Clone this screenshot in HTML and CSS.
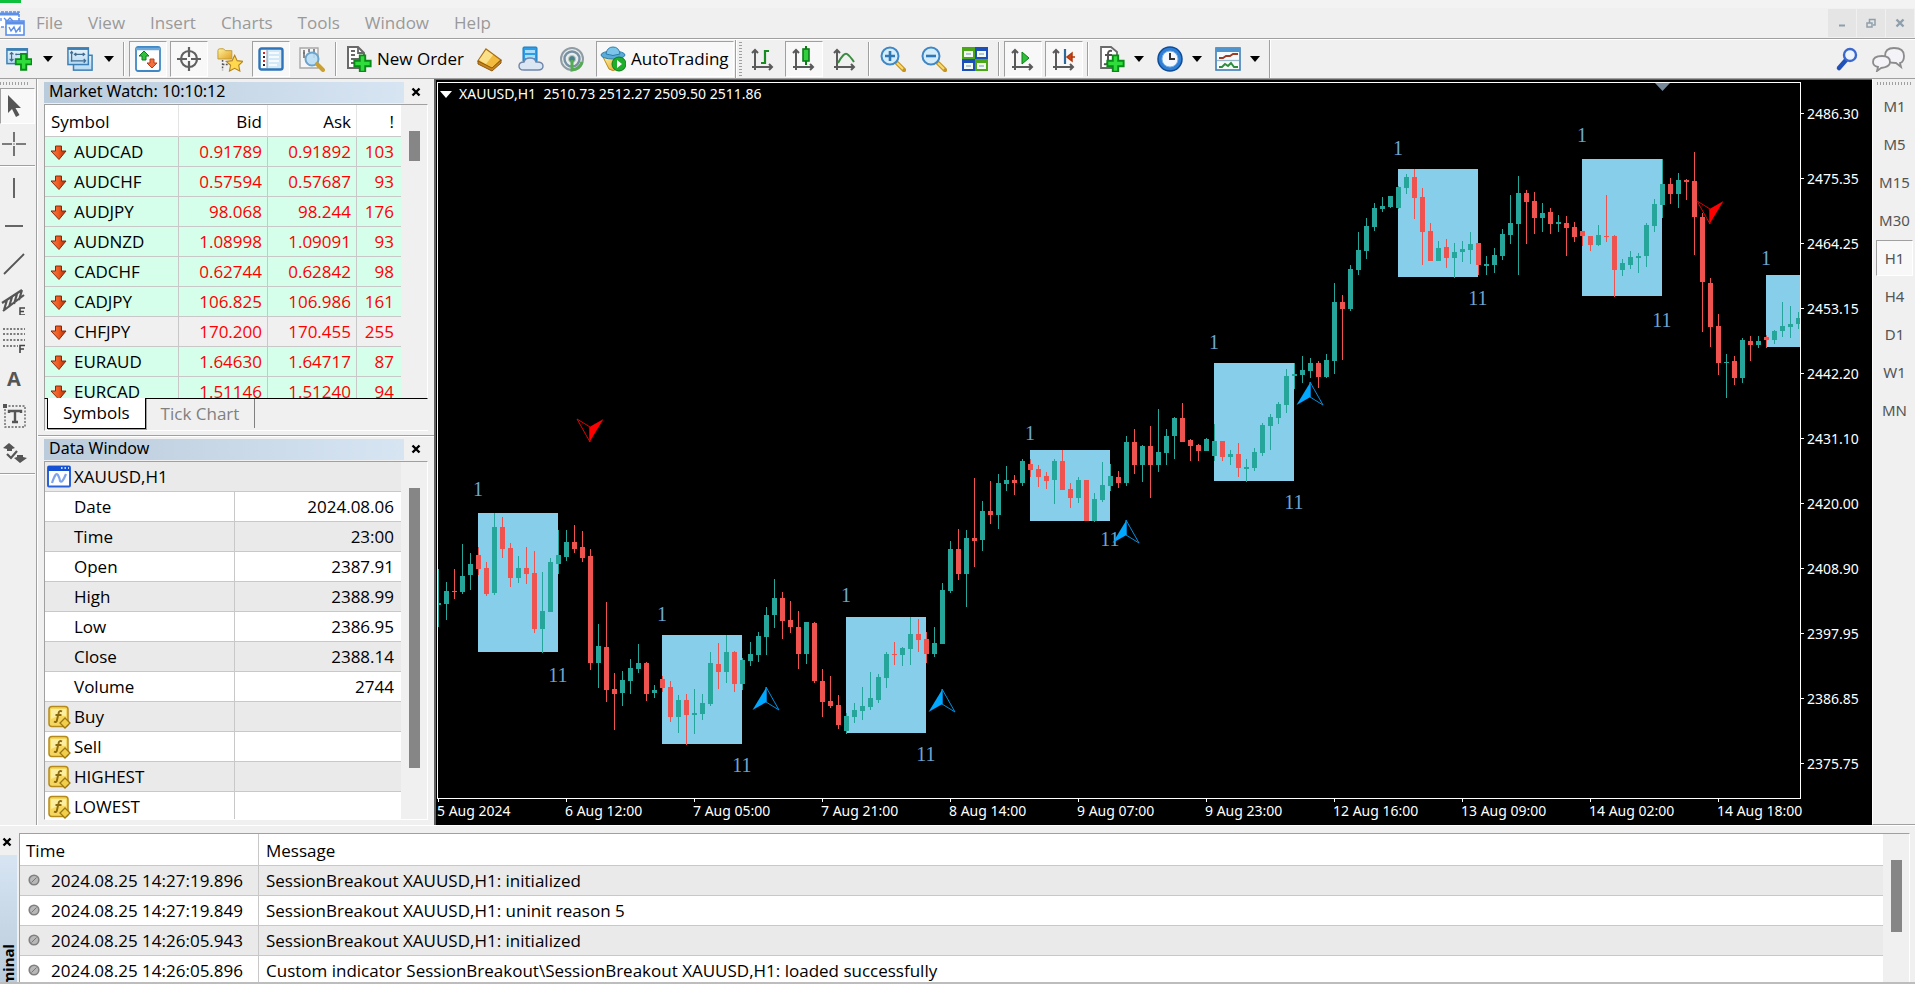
FILE: index.html
```html
<!DOCTYPE html>
<html lang="en">
<head>
<meta charset="utf-8">
<title>Trading terminal</title>
<link rel="stylesheet" href="styles.css">
</head>
<body>
<svg class="defs" width="0" height="0" aria-hidden="true">
  <defs>
    <linearGradient id="blue" x1="0" y1="0" x2="0" y2="1"><stop offset="0" stop-color="#eaf5fc"/><stop offset="1" stop-color="#b4d9f2"/></linearGradient>
    <linearGradient id="gold" x1="0" y1="0" x2="1" y2="1"><stop offset="0" stop-color="#fff2a0"/><stop offset="1" stop-color="#e2a020"/></linearGradient>
    <linearGradient id="flame" x1="0" y1="0" x2="1" y2="0"><stop offset="0" stop-color="#f08050"/><stop offset="0.5" stop-color="#ee5a20"/><stop offset="1" stop-color="#a82a04"/></linearGradient>
    <symbol id="plus" viewBox="0 0 14 14"><path d="M5 1h4v4h4v4H9v4H5V9H1V5h4z" fill="#2fdc3c" stroke="#0a8a18" stroke-width="1.4"/></symbol>
    <symbol id="close" viewBox="0 0 10 10"><path d="M1.500 1.500L8.500 8.500M8.500 1.500L1.500 8.500" stroke="currentColor" stroke-width="2.400"/></symbol>
    <symbol id="down" viewBox="0 0 18 18"><path d="M5.500 2h6v5h4.500L9 15.500 1 7h4.500z" fill="url(#flame)" stroke="#8c2606"/></symbol>
    <symbol id="fx" viewBox="0 0 24 24">
      <rect x="2" y="1.500" width="19" height="20" rx="3" fill="#f5d760" stroke="#b58a1c" stroke-width="1.500"/>
      <path d="M4 4h15v7q-8-1-15 3z" fill="#fbeea0"/>
      <path d="M15 6.500q-3-1.500-3.500 2L10 15q-.5 3-3 1.500M8.500 10h6" fill="none" stroke="#8c6a10" stroke-width="1.900"/>
      <path d="M18 13l5 5-5 5-5-5z" fill="#f2cf4a" stroke="#9c7612" stroke-width="1.300"/>
    </symbol>
    <symbol id="gear" viewBox="0 0 14 14"><circle cx="7" cy="7" r="4.800" fill="#b8b8b8" stroke="#808080" stroke-width="1.600"/><path d="M4.500 9.500l5-5" stroke="#777"/></symbol>
    <symbol id="axes" viewBox="0 0 24 26"><path d="M5 24V4M2 7l3-3 3 3M2 21h20M19 18l3 3-3 3" fill="none" stroke="#5a5a5a" stroke-width="2"/></symbol>
  </defs>
</svg>

<div class="app">
  <div class="titlebar"><span class="app-logo"></span></div>

  <nav class="menubar">
    <svg class="menu-logo" viewBox="0 0 26 26"><g fill="#fff" stroke="#5b8fe8" stroke-width="1.600"><rect x="-3" y="2" width="22" height="15" stroke-dasharray="3 1"/><path d="M-3 4h22" stroke-width="3"/><rect x="6" y="11" width="18" height="14"/><path d="M6 13h18" stroke-width="3"/></g><path d="M1 11v-3M4 8l3 3 3-3 3 3" fill="none" stroke="#5b8fe8" stroke-width="1.300"/><path d="M9 17l2 4 3-4 2 5 4-5v5" fill="none" stroke="#5b8fe8" stroke-width="1.400"/></svg>
    <button>File</button><button>View</button><button>Insert</button><button>Charts</button><button>Tools</button><button>Window</button><button>Help</button>
    <div class="window-buttons">
      <button aria-label="Minimize"><svg width="10" height="10"><path d="M2 7.500h6" stroke="#8e9fac" stroke-width="2"/></svg></button>
      <button aria-label="Restore"><svg width="10" height="10"><path d="M1 5h5v4H1zM3.500 4.500V1.500H9V7H7" fill="none" stroke="#8e9fac" stroke-width="1.500"/></svg></button>
      <button aria-label="Close"><svg width="10" height="10" color="#8e9fac"><use href="#close"/></svg></button>
    </div>
  </nav>

  <div class="toolbar">
    <div class="group standard">
      <button class="tool" aria-label="New chart"><svg viewBox="0 0 28 26"><rect x="1" y="2" width="22" height="16" fill="url(#blue)" stroke="#3c7fb4" stroke-width="1.600"/><path d="M1 3h22" stroke="#3c7fb4" stroke-width="2.500"/><path d="M6 6v9M4 8l2-2 2 2M4 13l2 2 2-2M10 8h8M11 7v2" fill="none" stroke="#406c90" stroke-width="1.300"/><use href="#plus" x="9" y="6" width="20" height="20"/></svg></button>
      <button class="caret" aria-label="New chart list"></button>
      <button class="tool" aria-label="Profiles"><svg viewBox="0 0 28 26"><g fill="url(#blue)" stroke="#3c7fb4" stroke-width="1.600"><rect x="7" y="9" width="20" height="16"/><rect x="1" y="1" width="22" height="18"/></g><path d="M1 2h22" stroke="#3c7fb4" stroke-width="2.500"/><path d="M5 5v11M3.500 7L5 5l1.500 2M8 8h11M10 6.500L8 8l2 1.500M17 6.500L19 8l-2 1.500M4 15h16M18 13l2 2-2 2" fill="none" stroke="#406c90" stroke-width="1.300"/></svg></button>
      <button class="caret" aria-label="Profile list"></button>
      <i class="sep"></i>
      <button class="tool pressed" aria-label="Market Watch"><svg viewBox="0 0 26 26"><rect x="1" y="1" width="24" height="24" rx="2" fill="#fff" stroke="#3f88c5" stroke-width="1.800"/><path d="M1 3h24" stroke="#6fa9d8" stroke-width="2.500"/><path d="M9 5l5 5h-3v4H7v-4H4z" fill="#2fc23c" stroke="#0f7a1c"/><path d="M17 22l-5-5h3v-4h4v4h3z" fill="#f07040" stroke="#c03a10"/></svg></button>
      <button class="tool pressed" aria-label="Data Window"><svg viewBox="0 0 26 26"><circle cx="13" cy="13" r="8" fill="none" stroke="#606060" stroke-width="2.200"/><path d="M13 1v10M13 15v10M1 13h10M15 13h10" stroke="#606060" stroke-width="2.200"/></svg></button>
      <button class="tool" aria-label="Navigator"><svg viewBox="0 0 28 26"><path d="M1 4q0-2 2-2h4l2 2h7v9H1z" fill="url(#gold)" stroke="#c09a30"/><path d="M6 14v11M6 19h6" stroke="#555" stroke-width="1.600" stroke-dasharray="2 1.500"/><path d="M19 9l2.700 5.800 6.300.7-4.600 4.300 1.200 6.200L19 23l-5.600 3 1.200-6.200-4.600-4.300 6.300-.7z" fill="#ffd84e" stroke="#b58420" stroke-width="1.200"/></svg></button>
      <button class="tool pressed" aria-label="Terminal"><svg viewBox="0 0 26 26"><rect x="1.500" y="2.500" width="23" height="21" rx="2" fill="#d4e9f8" stroke="#2f74b8" stroke-width="2.400"/><rect x="3" y="4" width="6" height="18" fill="#fff"/><path d="M9 4v18" stroke="#89a"/><path d="M11 7h10M11 11h10M11 15h10M11 19h8" stroke="#fff" stroke-width="1.600"/><path d="M5 7h2M5 15h2" stroke="#d22" stroke-width="2"/><path d="M5 11h2M5 19h2" stroke="#223" stroke-width="2"/></svg></button>
      <button class="tool" aria-label="Strategy Tester"><svg viewBox="0 0 26 26"><path d="M1 2h18v20H1z" fill="#f6f6f6" stroke="#a8a8a8" stroke-width="1.400"/><path d="M5 4v8M15 3v9M4 7h2M10 3v3" stroke="#707070" stroke-width="1.600"/><circle cx="13" cy="13" r="6.500" fill="#b9def5" fill-opacity=".9" stroke="#6ba3cc" stroke-width="2"/><path d="M18 18l6 6" stroke="#caa030" stroke-width="4" stroke-linecap="round"/></svg></button>
      <i class="sep"></i>
      <button class="tool wide order"><svg viewBox="0 0 26 26"><path d="M2 1h10l6 6v15H2z" fill="#fff" stroke="#6a6a6a" stroke-width="2"/><path d="M12 1v6h6M5 5h4M5 9h4M5 13h8M5 17h6" fill="none" stroke="#6a6a6a" stroke-width="1.800"/><use href="#plus" x="7" y="8" width="19" height="19"/></svg>New Order</button>
      <button class="tool" aria-label="MetaEditor"><svg viewBox="0 0 26 26"><path d="M9 3l15 11-9 9L1 15z" fill="#f2bb3e" stroke="#a8701a" stroke-width="1.400"/><path d="M9 4L2 14l7 4 7-9z" fill="#fbe08a"/><path d="M1 15l14 7 9-8v3l-9 8L1 18z" fill="#c8831c" stroke="#8c5a10"/></svg></button>
      <button class="tool" aria-label="Hosting"><svg viewBox="0 0 26 26"><rect x="5" y="1" width="14" height="15" rx="1" fill="#2e9de8" stroke="#1c78bd"/><path d="M7 4h10v3H7zM7 9h10v3H7z" fill="#a9defc"/><path d="M6 24q-5 0-5-4t5-4q1-4 6-4 5 0 6 4h1q6 0 6 4t-5 4z" fill="#dbe6f4" stroke="#6f86a8" stroke-width="1.400"/></svg></button>
      <button class="tool" aria-label="Signals"><svg viewBox="0 0 26 26"><circle cx="13" cy="13" r="11" fill="#e8ecec" stroke="#8f9ca4" stroke-width="2"/><circle cx="13" cy="13" r="7.500" fill="none" stroke="#7890a4" stroke-width="2.400"/><circle cx="13" cy="13" r="3.500" fill="#4a7f8c" stroke="#b8cab8"/><path d="M13 14v10q8-1 10-8" fill="none" stroke="#55ac50" stroke-width="3"/></svg></button>
      <button class="tool wide auto pressed"><svg viewBox="0 0 26 26"><path d="M3 11h19l-5 12q-4 3-8 0z" fill="url(#gold)" stroke="#b98a20"/><ellipse cx="13" cy="9" rx="12" ry="4" fill="#5aabd8" stroke="#2c7dac"/><path d="M6 8q1-7 7-7t7 7q-7 3-14 0z" fill="#7cc4ea" stroke="#2c7dac"/><circle cx="19" cy="18" r="7" fill="#1fae2c" stroke="#0c7c18"/><path d="M17 14l5 4-5 4z" fill="#fff"/></svg>AutoTrading</button>
    </div>
    <i class="edge"></i>
    <i class="grip"></i>
    <div class="group charts">
      <button class="tool" aria-label="Bar chart"><svg viewBox="0 0 26 26"><use href="#axes" width="24" height="26"/><path d="M15 4v14M15 5h4M11 17h4" stroke="#178c20" stroke-width="2.200"/></svg></button>
      <button class="tool pressed" aria-label="Candlesticks"><svg viewBox="0 0 26 26"><use href="#axes" width="24" height="26"/><path d="M15 0v19" stroke="#0c7c18" stroke-width="2"/><rect x="12" y="3" width="6" height="12" fill="#2fd03c" stroke="#0c7c18" stroke-width="1.600"/></svg></button>
      <button class="tool" aria-label="Line chart"><svg viewBox="0 0 26 26"><use href="#axes" width="24" height="26"/><path d="M6 17q6-11 9-9t7 8" fill="none" stroke="#3a8a40" stroke-width="2"/></svg></button>
      <i class="sep"></i>
      <button class="tool" aria-label="Zoom in"><svg viewBox="0 0 26 26"><path d="M16 16l8 8" stroke="#c89422" stroke-width="4.500" stroke-linecap="round"/><path d="M17 17l6 6" stroke="#f8dc70" stroke-width="2"/><circle cx="10" cy="10" r="8.500" fill="#d5edfa" stroke="#3f88c5" stroke-width="2"/><path d="M10 5v10M5 10h10" stroke="#2f78b4" stroke-width="2.600"/></svg></button>
      <button class="tool" aria-label="Zoom out"><svg viewBox="0 0 26 26"><path d="M16 16l8 8" stroke="#c89422" stroke-width="4.500" stroke-linecap="round"/><path d="M17 17l6 6" stroke="#f8dc70" stroke-width="2"/><circle cx="10" cy="10" r="8.500" fill="#d5edfa" stroke="#3f88c5" stroke-width="2"/><path d="M5 10h10" stroke="#2f78b4" stroke-width="2.600"/></svg></button>
      <button class="tool" aria-label="Tile windows"><svg viewBox="0 0 26 26"><path d="M0 1h13v12H0zM13 13h13v12H13z" fill="#4aa818"/><path d="M13 1h13v12H13zM0 13h13v12H0z" fill="#1c50b8"/><path d="M2 5h9v6H2zM15 5h9v6h-9zM2 17h9v6H2zM15 17h9v6h-9z" fill="#f4faf0"/><path d="M4 8h5M17 8h5M4 20h5M17 20h5" stroke="#9ab8d0" stroke-width="1.500"/></svg></button>
      <i class="sep"></i>
      <button class="tool pressed" aria-label="Auto scroll"><svg viewBox="0 0 26 26"><use href="#axes" width="24" height="26"/><path d="M12 6l7 6-7 6z" fill="#2fc03a" stroke="#0c7c18"/></svg></button>
      <button class="tool pressed" aria-label="Chart shift"><svg viewBox="0 0 26 26"><use href="#axes" width="24" height="26"/><path d="M14 3v15" stroke="#2a6a9a" stroke-width="2.200"/><path d="M24 11h-4M21 7l-5 4 5 4z" fill="#d0441c" stroke="#b0380c" stroke-width="1.500"/></svg></button>
      <i class="sep"></i>
      <button class="tool" aria-label="Indicators"><svg viewBox="0 0 26 26"><path d="M2 1h10l6 5v16H2z" fill="#fff" stroke="#6a6a6a" stroke-width="1.800"/><path d="M13 5q-4-1-4 3v7q0 4-4 3M6 9h7" fill="none" stroke="#555" stroke-width="2"/><use href="#plus" x="7" y="8" width="19" height="19"/></svg></button>
      <button class="caret" aria-label="Indicator list"></button>
      <button class="tool" aria-label="Periods"><svg viewBox="0 0 26 26"><circle cx="13" cy="13" r="12" fill="#2f7fd6" stroke="#0e4c98" stroke-width="1.500"/><circle cx="13" cy="13" r="8" fill="#f4f8fc" stroke="#7ab0e4"/><path d="M13 7v6h5" fill="none" stroke="#333" stroke-width="2"/></svg></button>
      <button class="caret" aria-label="Period list"></button>
      <button class="tool" aria-label="Templates"><svg viewBox="0 0 26 26"><rect x="1" y="2" width="24" height="22" fill="#f6fafd" stroke="#3f7fb4" stroke-width="1.600"/><path d="M1 4h24" stroke="#4f94cc" stroke-width="4"/><path d="M2 14.500h22" stroke="#9ab4c8" stroke-width="1.300"/><path d="M4 12h4l3-2h4l3-2h5" fill="none" stroke="#a03a20" stroke-width="1.900"/><path d="M4 21h3l3-3 3 2 3-3 3 4h4" fill="none" stroke="#2f8c3c" stroke-width="1.900"/></svg></button>
      <button class="caret" aria-label="Template list"></button>
    </div>
    <i class="edge"></i>
    <div class="group right">
      <button class="tool" aria-label="Search"><svg viewBox="0 0 26 26"><path d="M12 14L5 22" stroke="#2250b8" stroke-width="4.500" stroke-linecap="round"/><circle cx="16" cy="9" r="6" fill="#eef4fc" stroke="#3a68cc" stroke-width="2.400"/></svg></button>
      <button class="tool chat" aria-label="Community"><svg viewBox="0 0 34 26"><g fill="#f4f4f8" stroke="#8c8c8c" stroke-width="1.800"><path d="M22 2q10 0 10 8 0 6-4 7l1 4-5-4q-11 0-11-7 0-8 9-8z"/><path d="M10 10q8 0 8 6 0 5-9 6l-4 3 1-4q-5-1-5-5 0-6 9-6z"/></g></svg></button>
    </div>
  </div>

  <main class="main">
    <aside class="draw-tools">
      <i class="hgrip"></i>
      <button class="draw pressed" aria-label="Cursor"><svg viewBox="0 0 26 26"><path d="M6 2v18l4-4 4 8 3.500-2-4-7H19z" fill="#555"/></svg></button>
      <button class="draw" aria-label="Crosshair"><svg viewBox="0 0 26 26"><path d="M13 1v10M13 15v10M1 13h10M15 13h10M12.500 13h1" stroke="#555" stroke-width="1.600"/></svg></button>
      <i class="hsep"></i>
      <button class="draw" aria-label="Vertical line"><svg viewBox="0 0 26 26"><path d="M13 3v20" stroke="#555" stroke-width="1.800"/></svg></button>
      <button class="draw" aria-label="Horizontal line"><svg viewBox="0 0 26 26"><path d="M4 13h18" stroke="#555" stroke-width="1.800"/></svg></button>
      <button class="draw" aria-label="Trendline"><svg viewBox="0 0 26 26"><path d="M3 23L23 3" stroke="#555" stroke-width="1.800"/></svg></button>
      <button class="draw" aria-label="Equidistant channel"><svg viewBox="0 0 26 26"><path d="M1 14L21 1M2 22L23 6M6 11l-3 10M11 8L8 18M16 5l-3 10M21 1l-3 10" fill="none" stroke="#555" stroke-width="2.200"/><path d="M24 19h-5v7h5M19 22.500h4" fill="none" stroke="#444" stroke-width="1.500"/></svg></button>
      <button class="draw" aria-label="Fibonacci retracement"><svg viewBox="0 0 26 26"><path d="M2 2h22M2 7h22M2 13h22M2 19h15" stroke="#555" stroke-width="1.600" stroke-dasharray="2 1.500"/><path d="M24 18.500h-5V26M19 22h4" fill="none" stroke="#444" stroke-width="1.600"/></svg></button>
      <button class="draw letter">A</button>
      <button class="draw" aria-label="Text label"><svg viewBox="0 0 26 26"><rect x="4" y="3" width="20" height="21" fill="none" stroke="#666" stroke-width="1.400" stroke-dasharray="2 1.500"/><path d="M2 1h4v4H2z" fill="#555"/><path d="M8 10V8h12v2M14 8v11M11 19h6" fill="none" stroke="#555" stroke-width="2.400"/></svg></button>
      <button class="draw" aria-label="Arrows"><svg viewBox="0 0 26 26"><path d="M8 2l6 5-3 1v2H6V8L2 7z" fill="#555"/><path d="M6 13l4 4 6-7" fill="none" stroke="#555" stroke-width="2.200"/><path d="M19 22l-6-5 3-1v-2h6v2l4 1z" fill="#555"/></svg></button>
      <i class="hsep last"></i>
    </aside>

    <div class="dock">
      <section class="panel market">
        <header class="panel-head"><h2>Market Watch: 10:10:12</h2><button class="panel-close" aria-label="Close Market Watch"><svg width="10" height="10"><use href="#close"/></svg></button></header>
        <div class="panel-body">
          <table class="quotes">
            <thead><tr><th>Symbol</th><th>Bid</th><th>Ask</th><th>!</th></tr></thead>
            <tbody>
              <tr><td><svg><use href="#down"/></svg>AUDCAD</td><td>0.91789</td><td>0.91892</td><td>103</td></tr>
              <tr><td><svg><use href="#down"/></svg>AUDCHF</td><td>0.57594</td><td>0.57687</td><td>93</td></tr>
              <tr><td><svg><use href="#down"/></svg>AUDJPY</td><td>98.068</td><td>98.244</td><td>176</td></tr>
              <tr><td><svg><use href="#down"/></svg>AUDNZD</td><td>1.08998</td><td>1.09091</td><td>93</td></tr>
              <tr><td><svg><use href="#down"/></svg>CADCHF</td><td>0.62744</td><td>0.62842</td><td>98</td></tr>
              <tr><td><svg><use href="#down"/></svg>CADJPY</td><td>106.825</td><td>106.986</td><td>161</td></tr>
              <tr class="plain"><td><svg><use href="#down"/></svg>CHFJPY</td><td>170.200</td><td>170.455</td><td>255</td></tr>
              <tr><td><svg><use href="#down"/></svg>EURAUD</td><td>1.64630</td><td>1.64717</td><td>87</td></tr>
              <tr><td><svg><use href="#down"/></svg>EURCAD</td><td>1.51146</td><td>1.51240</td><td>94</td></tr>
            </tbody>
          </table>
          <div class="track"><div class="thumb market-thumb"></div></div>
        </div>
        <div class="tabs"><button class="tab active">Symbols</button><button class="tab">Tick Chart</button></div>
      </section>

      <section class="panel data">
        <header class="panel-head"><h2>Data Window</h2><button class="panel-close" aria-label="Close Data Window"><svg width="10" height="10"><use href="#close"/></svg></button></header>
        <div class="panel-body">
          <table class="values">
            <tbody>
              <tr><td colspan="2" class="icon"><svg viewBox="0 0 24 24"><rect x="1" y="1.500" width="22" height="20" rx="1" fill="#fff" stroke="#2c62d8" stroke-width="2"/><path d="M1 3.500h22" stroke="#1450d4" stroke-width="5"/><path d="M14 3h1.500M17.500 3H19M21 3h1" stroke="#fff" stroke-width="1.500"/><path d="M5 18q4-12 6-8t2 6q2 3 6-7" fill="none" stroke="#7ea4ec" stroke-width="2.200"/></svg>XAUUSD,H1</td></tr>
              <tr><td>Date</td><td>2024.08.06</td></tr>
              <tr><td>Time</td><td>23:00</td></tr>
              <tr><td>Open</td><td>2387.91</td></tr>
              <tr><td>High</td><td>2388.99</td></tr>
              <tr><td>Low</td><td>2386.95</td></tr>
              <tr><td>Close</td><td>2388.14</td></tr>
              <tr><td>Volume</td><td>2744</td></tr>
              <tr><td class="icon"><svg><use href="#fx"/></svg>Buy</td><td></td></tr>
              <tr><td class="icon"><svg><use href="#fx"/></svg>Sell</td><td></td></tr>
              <tr><td class="icon"><svg><use href="#fx"/></svg>HIGHEST</td><td></td></tr>
              <tr><td class="icon"><svg><use href="#fx"/></svg>LOWEST</td><td></td></tr>
            </tbody>
          </table>
          <div class="track"><div class="thumb data-thumb"></div></div>
        </div>
      </section>
    </div>

    <section class="chart">
      <div class="plot">
        <svg class="canvas" id="canvas" role="img" aria-label="XAUUSD H1 candlestick chart"></svg>
        <div class="caption"><i></i><span>XAUUSD,H1&nbsp; 2510.73 2512.27 2509.50 2511.86</span></div>
      </div>
      <div class="prices"><span>2486.30</span><span>2475.35</span><span>2464.25</span><span>2453.15</span><span>2442.20</span><span>2431.10</span><span>2420.00</span><span>2408.90</span><span>2397.95</span><span>2386.85</span><span>2375.75</span></div>
      <div class="times"><span>5 Aug 2024</span><span>6 Aug 12:00</span><span>7 Aug 05:00</span><span>7 Aug 21:00</span><span>8 Aug 14:00</span><span>9 Aug 07:00</span><span>9 Aug 23:00</span><span>12 Aug 16:00</span><span>13 Aug 09:00</span><span>14 Aug 02:00</span><span>14 Aug 18:00</span></div>
    </section>

    <aside class="frames">
      <i class="hgrip"></i>
      <button>M1</button><button>M5</button><button>M15</button><button>M30</button><button class="pressed">H1</button><button>H4</button><button>D1</button><button>W1</button><button>MN</button>
    </aside>
  </main>

  <section class="terminal">
    <div class="terminal-side">
      <button class="panel-close" aria-label="Close Terminal"><svg width="10" height="10"><use href="#close"/></svg></button>
      <div class="terminal-name"><span>Terminal</span></div>
    </div>
    <div class="log-wrap">
      <table class="log">
        <thead><tr><th>Time</th><th>Message</th></tr></thead>
        <tbody>
          <tr><td><svg><use href="#gear"/></svg>2024.08.25 14:27:19.896</td><td>SessionBreakout XAUUSD,H1: initialized</td></tr>
          <tr><td><svg><use href="#gear"/></svg>2024.08.25 14:27:19.849</td><td>SessionBreakout XAUUSD,H1: uninit reason 5</td></tr>
          <tr><td><svg><use href="#gear"/></svg>2024.08.25 14:26:05.943</td><td>SessionBreakout XAUUSD,H1: initialized</td></tr>
          <tr><td><svg><use href="#gear"/></svg>2024.08.25 14:26:05.896</td><td>Custom indicator SessionBreakout\SessionBreakout XAUUSD,H1: loaded successfully</td></tr>
        </tbody>
      </table>
      <div class="track"><div class="thumb log-thumb"></div></div>
    </div>
  </section>
</div>
<script src="script.js"></script>
</body>
</html>
```

FILE: styles.css
```css
* { box-sizing: border-box; }
body {
  margin: 0;
  background: #f0f0f0;
  color: #000;
  font: 17px/28px "Open Sans", "Noto Sans", sans-serif;
}
button { margin: 0; padding: 0; border: 0; background: none; color: inherit; font: inherit; }
i { display: block; flex: none; }
svg { display: block; flex: none; }
.defs { position: absolute; }
.app { display: flex; flex-direction: column; height: 100vh; overflow: hidden; }

.titlebar { flex: none; height: 8px; background: #f3f3f3; }
.app-logo { display: block; width: 21px; height: 3px; background: #0cc03c; }

.menubar { flex: none; display: flex; align-items: center; height: 31px; border-bottom: 1px solid #a0a0a0; color: #999; }
.menu-logo { width: 26px; height: 26px; margin-right: 10px; }
.menubar > button { margin-right: 25px; }
.window-buttons { display: flex; gap: 1px; margin-left: auto; padding-right: 1px; }
.window-buttons button { display: flex; align-items: center; justify-content: center; width: 28px; height: 28px; background: #e5e5e5; }

.toolbar { flex: none; display: flex; align-items: center; height: 40px; border-top: 1px solid #fff; border-bottom: 1px solid #a0a0a0; }
.group { display: flex; align-items: center; gap: 3px; }
.tool { display: flex; align-items: center; justify-content: center; width: 38px; height: 36px; flex: none; }
.tool svg { width: 26px; height: 26px; }
.tool.wide { gap: 5px; width: auto; }
.order { padding: 0 4px 0 5px; }
.auto { margin-left: 2px; padding: 0 4px 0 3px; }
.pressed { background: #f8f8f8; border: 1px solid; border-color: #a0a0a0 #fff #fff #a0a0a0; }
.caret { display: flex; align-items: center; justify-content: center; width: 17px; height: 36px; margin-left: -3px; }
.caret::before { content: ""; border: 5px solid transparent; border-top: 6px solid #000; border-bottom: 0; }
.standard .caret { width: 20px; }
.sep { width: 2px; height: 34px; margin: 0 1px; background: #a0a0a0; border-right: 1px solid #fff; }
.edge { width: 2px; height: 38px; margin-left: 1px; background: #a0a0a0; border-right: 1px solid #fff; }
.grip { width: 3px; height: 34px; margin: 0 2px; background: repeating-linear-gradient(#a0a0a0 0 1px, #f0f0f0 1px 3px); }
.charts { margin-right: 4px; }
.right { margin-left: auto; padding-right: 6px; }
.chat { width: 40px; }
.tool.chat svg { width: 34px; }

.main { flex: 1; display: flex; min-height: 0; }
.draw-tools { flex: none; display: flex; flex-direction: column; width: 38px; padding: 3px 2px 0 0; border-right: 1px solid #fff; box-shadow: inset -1px 0 #a0a0a0; }
.hgrip { height: 3px; margin: 0 7px 3px 0; background: repeating-linear-gradient(90deg, #a0a0a0 0 1px, #f0f0f0 1px 3px); }
.draw { display: flex; align-items: center; padding-left: 1px; height: 38px; flex: none; }
.draw svg { width: 26px; height: 26px; }
.draw.pressed { height: 36px; width: 35px; margin-bottom: 1px; }
.draw.letter { padding-left: 7px; color: #555; font: bold 20px "Open Sans", sans-serif; }
.hsep { height: 2px; margin: 2px 0; background: #a0a0a0; border-bottom: 1px solid #fff; }
.hsep.last { margin: 0; }

.dock { flex: none; display: flex; flex-direction: column; width: 396px; }
.panel { display: flex; flex-direction: column; padding: 3px 6px 0; }
.market { height: 357px; border-bottom: 1px solid #a0a0a0; }
.data { flex: 1; min-height: 0; border-top: 1px solid #fff; padding: 2px 6px 5px; }
.panel-head { flex: none; display: flex; height: 22px; }
.panel-head h2 { flex: 1; margin: 0; padding-left: 5px; height: 21px; background: linear-gradient(90deg, #bacbdb, #d7e5f3); font: 16px/18px "Noto Sans", sans-serif; }
.panel-close { display: flex; align-items: center; justify-content: center; width: 24px; height: 20px; }
.panel-body { flex: 1; min-height: 0; display: flex; overflow: hidden; border: 1px solid; border-color: #a0a0a0 #fff #fff #a0a0a0; }
.market .panel-body { border-bottom-color: #000; }
.track { flex: none; width: 26px; background: #f0f0f0; }
.thumb { width: 11px; margin-left: 8px; background: #868686; }
.market-thumb { height: 30px; margin-top: 26px; }
.data-thumb { height: 280px; margin-top: 26px; }
.log-thumb { height: 72px; margin-top: 26px; }

table { border-collapse: separate; border-spacing: 0; table-layout: fixed; flex: 1; align-self: flex-start; background: #fff; }
th, td { height: 30px; padding: 0; border-bottom: 1px solid #c8c8c8; text-align: left; font-weight: 400; white-space: nowrap; }
th { height: 32px; padding-top: 2px; }
.quotes th, .quotes td { border-right: 1px solid #c8c8c8; }
.quotes th { border-right-color: #e4e4e4; }
.quotes th:first-child { width: 134px; padding-left: 6px; }
.quotes th:nth-child(2), .quotes th:nth-child(3) { width: 89px; }
.quotes th:not(:first-child), .quotes td:not(:first-child) { text-align: right; padding-right: 5px; }
.quotes th:last-child, .quotes td:last-child { border-right: 0; padding-right: 7px; }
.quotes tbody tr { background: #d5ffeb; }
.quotes tbody .plain { background: #f0f0f0; }
.quotes td { color: #f00; }
.quotes td:first-child { color: #000; }
.quotes td svg { float: left; width: 18px; height: 18px; margin: 6px 6px 0 5px; }
.tabs { flex: none; display: flex; height: 32px; margin-bottom: 4px; border-bottom: 1px solid #fff; border-left: 1px solid #a0a0a0; padding-left: 2px; }
.tab { height: 29px; padding: 0 15px; color: #808080; border-right: 1px solid #808080; }
.tab.active { height: 31px; margin-top: -1px; z-index: 1; background: #fff; color: #000; border: solid #000; border-width: 0 1px 1px; box-shadow: 1px 1px #a0a0a0; }

.values tr:nth-child(odd) { background: #eaeaea; }
.values td { padding-left: 29px; width: 190px; }
.values td:first-child:not([colspan]) { border-right: 1px solid #c8c8c8; }
.values td:nth-child(2) { width: 166px; padding-right: 7px; text-align: right; }
.values .icon { padding-left: 2px; }
.values .icon svg { float: left; width: 24px; height: 24px; margin: 2px 3px 0 0; }

.chart { flex: 1; min-width: 0; display: grid; grid-template: 1fr 26px / 1fr 71px; padding: 2px 0 0 1px; background: #000; color: #fff; border: solid #606060; border-width: 1px 0 0 2px; font: 14px/20px "Noto Sans", sans-serif; }
.plot { position: relative; overflow: hidden; border: 1px solid #fff; }
.canvas { position: absolute; width: 100%; height: 100%; }
.up { fill: #26a69a; }
.down { fill: #ef5350; }
.session { fill: #87ceeb; }
.hour { fill: #6ca6d0; font: 20px "Liberation Serif", serif; text-anchor: middle; }
.caption { position: absolute; top: 1px; left: 2px; display: flex; align-items: center; gap: 7px; }
.caption i { border: 6px solid transparent; border-top: 7px solid #fff; border-bottom: 0; }
.prices { display: flex; flex-direction: column; margin-top: -1px; min-height: 0; }
.prices span { height: 65px; flex: none; display: flex; align-items: center; gap: 3px; }
.prices span::before { content: ""; width: 3px; height: 1px; background: #fff; }
.times { display: flex; grid-column: 1 / -1; white-space: nowrap; overflow: hidden; }
.times span { width: 128px; flex: none; line-height: 18px; }
.times span::before { content: ""; display: block; width: 1px; height: 3px; margin-left: 1px; background: #fff; }

.frames { flex: none; display: flex; flex-direction: column; width: 43px; padding: 3px 2px 0 3px; border-left: 1px solid #fff; border-bottom: 1px solid #a0a0a0; color: #555; }
.frames .hgrip { margin: 0 0 3px 1px; }
.frames button { height: 36px; margin-bottom: 2px; flex: none; font: 15px "Noto Sans", sans-serif; }

.terminal { flex: none; display: flex; height: 159px; padding-right: 5px; border-top: 1px solid #fff; border-bottom: 2px solid #bdbdbd; }
.terminal-side { display: flex; flex-direction: column; width: 19px; padding-top: 4px; }
.terminal-side .panel-close { width: 14px; height: 23px; margin-bottom: 2px; }
.terminal-name { flex: 1; width: 17px; overflow: hidden; background: linear-gradient(#d7e5f3, #bacbdb); }
.terminal-name span { display: block; writing-mode: vertical-rl; transform: rotate(180deg); margin-top: 89px; font: bold 15px/17px "Noto Sans", sans-serif; }
.log-wrap { flex: 1; display: flex; margin-top: 7px; overflow: hidden; border: 1px solid; border-color: #a0a0a0 #fff #fff #a0a0a0; border-bottom: 0; }
.log th:first-child { width: 239px; padding-left: 6px; }
.log th:first-child, .log td:first-child { border-right: 1px solid #c8c8c8; }
.log th, .log td { padding-left: 7px; }
.log tbody tr:nth-child(odd) { background: #eaeaea; }
.log td svg { float: left; width: 14px; height: 14px; margin: 6px 10px 0 0; }
```

FILE: script.js
```js
// Plot origin in window units; bars are 8 px apart.
const ORIGIN = { x: 438, y: 83 };
const STEP = 8;

// Each block: base height, then bars as [direction, high, bodyTop, bodyBottom, low]
// measured downwards from the base in thirds of a pixel.
const BLOCKS = [
  [480, [
    [1,267,369,375,440],[1,306,333,372,419],[0,267,333,336,356],[1,192,288,336,341],[1,219,252,285,329],
    [0,201,225,267,284],[0,246,264,342,347],[1,99,141,339,344],[0,111,141,207,233],[0,189,204,294,320],
    [1,228,264,294,308],[0,201,264,282,311],[0,213,279,447,458],[1,276,393,447,518],[1,234,246,396,396],
    [1,150,225,252,281],[1,150,186,231,242],[0,135,186,207,218],[0,153,201,234,245],[0,207,228,549,569],
    [1,432,498,549,623],[0,366,501,630,665],[0,579,627,642,749],[1,573,600,639,677],[1,537,564,603,641],
    [1,492,549,567,578],[0,546,549,642,662],[1,615,630,639,653],[0,588,597,624,635],[0,603,621,711,725],
    [1,645,660,711,758],[0,642,660,705,794],[1,627,699,705,761],[1,642,669,702,719],[1,516,549,672,677],
    [0,489,552,576,626],[1,465,516,576,608],[0,513,516,612,635],[1,534,540,612,629],[1,486,522,543,557],
    [1,456,468,525,545],[1,381,405,471,524],[1,297,354,405,443],[0,336,354,423,476],[0,363,420,441,458],
    [0,393,441,522,566],[1,426,426,522,551],[0,426,429,603,608],[0,567,603,666,710],[0,588,663,678,683],
    [0,645,675,735,746],[1,699,708,753,761],[1,669,690,711,728],[1,621,678,693,719],[1,576,654,681,689],
    [1,582,591,660,668],[1,516,522,594,623],[0,486,522,525,554],[1,501,504,525,557],[1,411,462,507,554],
    [0,417,462,480,515],[0,456,477,522,548]
  ]],
  [540, [[1,261,309,342,350],[1,129,150,312,312]]],
  [330, [
    [1,633,657,783,788],[0,597,657,732,749],[1,600,624,732,830],[0,444,624,633,710],[1,513,543,630,662],
    [0,453,543,555,581],[1,432,459,555,596],[1,408,450,462,482],[0,435,450,459,494],[1,387,393,459,467],
    [0,387,402,420,440],[0,405,417,441,470],[0,426,438,453,476],[1,387,393,450,521],[0,360,393,480,480],
    [0,459,477,504,533],[1,441,450,504,518],[0,450,450,573,573],[1,489,507,573,575],[1,396,465,510,515],
    [1,402,438,468,482],[0,423,441,459,473],[1,318,336,459,467],[0,297,336,405,431],[1,345,348,405,455],
    [0,288,348,405,503],[1,237,366,405,425],[1,297,318,369,404],[1,261,264,318,386],[0,219,264,336,336],
    [0,327,330,348,392],[0,342,345,363,392],[1,324,327,363,363],[1,282,333,378,392],[0,333,333,381,392],
    [1,360,372,381,404],[0,339,372,414,440],[1,387,411,417,455],[1,354,366,414,422],[1,279,285,369,377],
    [1,252,261,288,359],[1,216,222,264,281],[1,117,138,225,248],[1,99,132,138,176],[1,78,120,135,158],
    [1,84,99,123,143],[0,93,99,141,173],[1,72,90,141,143]
  ]],
  [80, [
    [1,609,666,843,881],[0,645,666,687,839],[1,555,567,687,692],[1,456,510,570,584],[1,414,438,513,536],
    [1,369,384,441,452],[1,351,378,387,395],[1,348,348,381,383],[1,318,321,384,386],[1,282,291,324,341],
    [0,267,291,354,416],[0,324,351,456,554],[0,429,453,543,543],[1,483,504,543,543],[0,477,501,534,563],
    [1,489,516,534,593],[1,483,507,516,545],[1,456,492,510,551],[0,489,489,555,584],[1,528,552,558,584],
    [1,504,525,555,578],[1,447,462,528,539],[1,345,429,465,491],[1,288,339,432,584],[0,330,339,366,491],
    [0,336,363,414,461],[1,369,399,414,455],[0,384,396,432,461],[1,405,426,432,455],[0,408,429,444,527],
    [0,426,441,471,485],[0,453,453,468,497],[0,468,468,495,512],[1,435,465,495,497],[0,345,468,471,485],
    [0,465,468,570,650],[1,537,549,570,587],[1,513,531,555,566],[1,519,528,534,578],[1,429,435,528,560],
    [1,357,372,438,455],[1,237,312,375,413],[0,294,312,342,371],[1,279,300,342,383],[0,297,300,306,359],
    [0,216,303,411,524],[0,399,411,606,755],[0,594,609,741,800],[0,702,738,849,884],[1,822,846,849,953],
    [0,828,843,894,914],[1,774,780,894,908],[0,768,783,795,842],[1,768,783,795,803],[0,765,771,780,803],
    [1,750,753,780,791],[1,666,738,753,770],[1,678,732,741,773],[1,696,714,732,746]
  ]]
];

// Session boxes: left, top, bottom, baseline of the opening hour, baseline of the closing hour
const SESSIONS = [
  [478,513,652,496,682],[662,635,744,621,772],[846,617,733,602,761],[1030,450,521,440,546],
  [1214,363,481,349,509],[1398,169,277,155,305],[1582,159,296,142,327],[1766,275,347,265,0]
];
const SESSION_WIDTH = 80;
const BUY = [[766,687],[942,689],[1126,520],[1310,382]];
const SELL = [[590,442],[1710,224]];

const parts = [];
for (const [x, top, bottom] of SESSIONS) {
  parts.push(`<rect class="session" x="${x}" y="${top}" width="${SESSION_WIDTH}" height="${bottom - top}"/>`);
}
let x = ORIGIN.x;
for (const [base, bars] of BLOCKS) {
  for (const [rising, ...levels] of bars) {
    const [high, top, bottom, low] = levels.map(v => base + Math.round(v / 3));
    const kind = rising ? "up" : "down";
    parts.push(`<path class="${kind}" d="M${x} ${high}h1V${low}h-1zM${x - 2} ${top}h5V${bottom}h-5z"/>`);
    x += STEP;
  }
}
for (const [left, , , open, close] of SESSIONS) {
  parts.push(`<text class="hour" x="${left}" y="${open}">1</text>`);
  if (close) parts.push(`<text class="hour" x="${left + SESSION_WIDTH}" y="${close}">11</text>`);
}
for (const [ax, ay] of BUY) {
  parts.push(`<path d="M${ax} ${ay}l13 23-13-8z" fill="none" stroke="#0090e0"/><path d="M${ax + 0.5} ${ay}v15l-14 8z" fill="#00a8ff"/>`);
}
for (const [ax, ay] of SELL) {
  parts.push(`<path d="M${ax} ${ay}l-13-23 13 8z" fill="none" stroke="#e00000"/><path d="M${ax - 0.5} ${ay}v-15l14-8z" fill="#f00"/>`);
}
parts.push('<path d="M1655 83h15l-7.500 8z" fill="#778899"/>');
document.getElementById("canvas").innerHTML = `<g transform="translate(${-ORIGIN.x} ${-ORIGIN.y})">${parts.join("")}</g>`;
```
